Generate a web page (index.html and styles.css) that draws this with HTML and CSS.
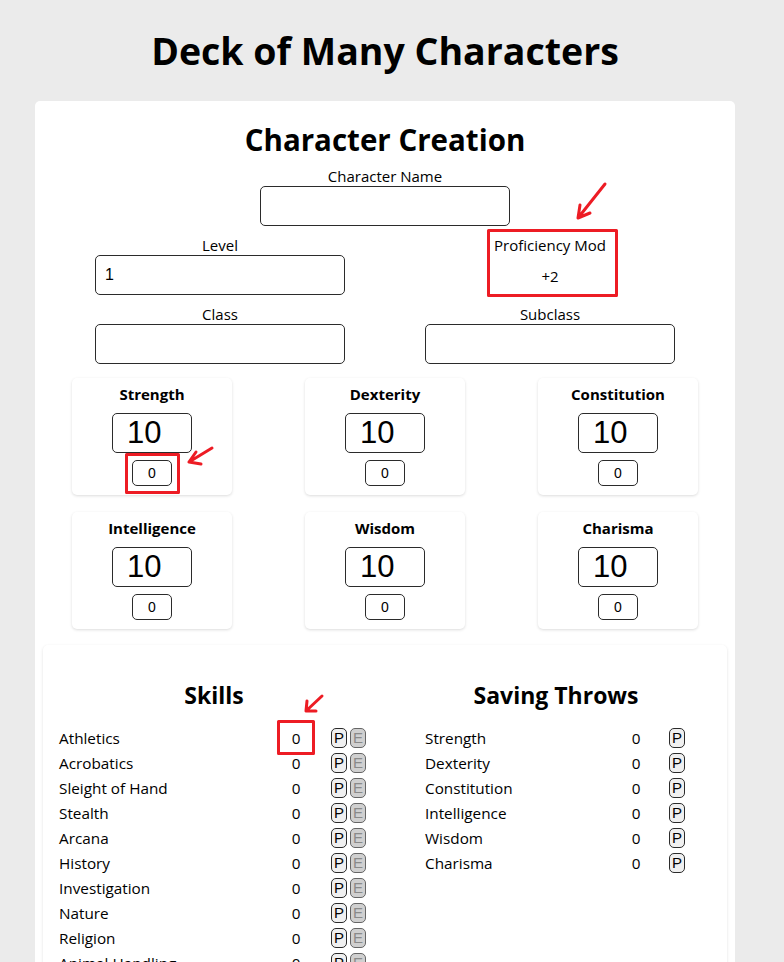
FILE: index.html
```html
<!DOCTYPE html>
<html lang="en">
<head>
<meta charset="utf-8">
<title>Deck of Many Characters</title>
<link rel="stylesheet" href="styles.css">
</head>
<body>
<div class="page">
  <h1 class="title">Deck of Many Characters</h1>
  <main class="card">
    <h2 class="card-title">Character Creation</h2>
    <div class="field field-name">
      <label class="field-label" for="cname">Character Name</label>
      <input class="text-input" id="cname" type="text">
    </div>
    <div class="field-grid">
      <div class="field">
        <label class="field-label" for="level">Level</label>
        <input class="text-input" id="level" type="text" value="1">
      </div>
      <div class="field">
        <span class="field-label">Proficiency Mod</span>
        <span class="prof-value">+2</span>
      </div>
      <div class="field">
        <label class="field-label" for="class">Class</label>
        <input class="text-input" id="class" type="text">
      </div>
      <div class="field">
        <label class="field-label" for="subclass">Subclass</label>
        <input class="text-input" id="subclass" type="text">
      </div>
    </div>

    <div class="ability-grid">
      <div class="ability"><div class="ability-name">Strength</div><input class="ability-score" type="text" value="10"><input class="ability-mod" type="text" value="0"></div>
      <div class="ability"><div class="ability-name">Dexterity</div><input class="ability-score" type="text" value="10"><input class="ability-mod" type="text" value="0"></div>
      <div class="ability"><div class="ability-name">Constitution</div><input class="ability-score" type="text" value="10"><input class="ability-mod" type="text" value="0"></div>
      <div class="ability"><div class="ability-name">Intelligence</div><input class="ability-score" type="text" value="10"><input class="ability-mod" type="text" value="0"></div>
      <div class="ability"><div class="ability-name">Wisdom</div><input class="ability-score" type="text" value="10"><input class="ability-mod" type="text" value="0"></div>
      <div class="ability"><div class="ability-name">Charisma</div><input class="ability-score" type="text" value="10"><input class="ability-mod" type="text" value="0"></div>
    </div>

    <section class="panel">
      <div class="panel-col col-skills">
        <h3 class="panel-title">Skills</h3>
        <ul class="stat-list">
          <li class="stat-row"><span class="stat-name">Athletics</span><span class="stat-val">0</span><span class="badges"><button class="badge">P</button><button class="badge badge-off">E</button></span></li>
          <li class="stat-row"><span class="stat-name">Acrobatics</span><span class="stat-val">0</span><span class="badges"><button class="badge">P</button><button class="badge badge-off">E</button></span></li>
          <li class="stat-row"><span class="stat-name">Sleight of Hand</span><span class="stat-val">0</span><span class="badges"><button class="badge">P</button><button class="badge badge-off">E</button></span></li>
          <li class="stat-row"><span class="stat-name">Stealth</span><span class="stat-val">0</span><span class="badges"><button class="badge">P</button><button class="badge badge-off">E</button></span></li>
          <li class="stat-row"><span class="stat-name">Arcana</span><span class="stat-val">0</span><span class="badges"><button class="badge">P</button><button class="badge badge-off">E</button></span></li>
          <li class="stat-row"><span class="stat-name">History</span><span class="stat-val">0</span><span class="badges"><button class="badge">P</button><button class="badge badge-off">E</button></span></li>
          <li class="stat-row"><span class="stat-name">Investigation</span><span class="stat-val">0</span><span class="badges"><button class="badge">P</button><button class="badge badge-off">E</button></span></li>
          <li class="stat-row"><span class="stat-name">Nature</span><span class="stat-val">0</span><span class="badges"><button class="badge">P</button><button class="badge badge-off">E</button></span></li>
          <li class="stat-row"><span class="stat-name">Religion</span><span class="stat-val">0</span><span class="badges"><button class="badge">P</button><button class="badge badge-off">E</button></span></li>
          <li class="stat-row"><span class="stat-name">Animal Handling</span><span class="stat-val">0</span><span class="badges"><button class="badge">P</button><button class="badge badge-off">E</button></span></li>
          <li class="stat-row"><span class="stat-name">Insight</span><span class="stat-val">0</span><span class="badges"><button class="badge">P</button><button class="badge badge-off">E</button></span></li>
          <li class="stat-row"><span class="stat-name">Medicine</span><span class="stat-val">0</span><span class="badges"><button class="badge">P</button><button class="badge badge-off">E</button></span></li>
          <li class="stat-row"><span class="stat-name">Perception</span><span class="stat-val">0</span><span class="badges"><button class="badge">P</button><button class="badge badge-off">E</button></span></li>
          <li class="stat-row"><span class="stat-name">Survival</span><span class="stat-val">0</span><span class="badges"><button class="badge">P</button><button class="badge badge-off">E</button></span></li>
        </ul>
      </div>
      <div class="panel-col col-saves">
        <h3 class="panel-title">Saving Throws</h3>
        <ul class="stat-list">
          <li class="stat-row"><span class="stat-name">Strength</span><span class="stat-val">0</span><span class="badges"><button class="badge">P</button></span></li>
          <li class="stat-row"><span class="stat-name">Dexterity</span><span class="stat-val">0</span><span class="badges"><button class="badge">P</button></span></li>
          <li class="stat-row"><span class="stat-name">Constitution</span><span class="stat-val">0</span><span class="badges"><button class="badge">P</button></span></li>
          <li class="stat-row"><span class="stat-name">Intelligence</span><span class="stat-val">0</span><span class="badges"><button class="badge">P</button></span></li>
          <li class="stat-row"><span class="stat-name">Wisdom</span><span class="stat-val">0</span><span class="badges"><button class="badge">P</button></span></li>
          <li class="stat-row"><span class="stat-name">Charisma</span><span class="stat-val">0</span><span class="badges"><button class="badge">P</button></span></li>
        </ul>
      </div>
    </section>
  </main>

  <svg class="annotations" width="784" height="962" viewBox="0 0 784 962" aria-hidden="true">
    <g fill="none" stroke="#ed1c24" stroke-width="3" stroke-linecap="round" stroke-linejoin="round">
      <rect x="488.5" y="230.5" width="128" height="65"/>
      <path d="M605 184 L578 218 M578 218 L580 205 M578 218 L590 213"/>
      <rect x="126.5" y="454.5" width="52" height="38"/>
      <path d="M212 448 L189 462 M189 462 L196 452 M189 462 L201 464"/>
      <rect x="278.5" y="721.5" width="35" height="32"/>
      <path d="M322 696 L306 711 M306 711 L307 701 M306 711 L316 711"/>
    </g>
  </svg>
</div>
</body>
</html>
```

FILE: styles.css
```css
* { box-sizing: border-box; }

html, body {
  margin: 0;
  padding: 0;
}

body {
  background: #ebebeb;
  font-family: "Open Sans", "Noto Sans", sans-serif;
  font-size: 16px;
  color: #000;
}

.page {
  position: relative;
  width: 770px;
  padding-top: 27px;
  min-height: 962px;
}

.title {
  margin: 0 0 26px;
  font-size: 37.5px;
  line-height: 48px;
  font-weight: 700;
  text-align: center;
}

.card {
  width: 700px;
  margin: 0 auto;
  background: #fff;
  border-radius: 5px;
  padding: 19px 0 20px;
}

.card-title {
  margin: 0 0 6px;
  font-size: 29.5px;
  line-height: 40px;
  font-weight: 700;
  text-align: center;
}

.field {
  display: flex;
  flex-direction: column;
  align-items: center;
  width: 250px;
}

.field-name {
  margin: 0 auto 9px;
}

.field-label {
  display: block;
  font-size: 15px;
  line-height: 20px;
  text-align: center;
}

.text-input {
  width: 250px;
  height: 40px;
  border: 1px solid #2b2b2b;
  border-radius: 5px;
  padding: 0 9px;
  font-family: "Liberation Sans", Arial, sans-serif;
  font-size: 16px;
  background: #fff;
  color: #000;
}

.prof-value {
  display: block;
  margin-top: 11px;
  font-size: 15px;
  line-height: 20px;
}

.field-grid {
  display: grid;
  grid-template-columns: 250px 250px;
  justify-content: center;
  column-gap: 80px;
  row-gap: 9px;
}

.ability-grid {
  display: grid;
  grid-template-columns: repeat(3, 160px);
  justify-content: center;
  column-gap: 73px;
  row-gap: 17px;
  margin-top: 14px;
}

.ability {
  display: flex;
  flex-direction: column;
  align-items: center;
  height: 117px;
  padding-top: 6px;
  background: #fff;
  border-radius: 5px;
  box-shadow: 0 1px 3px rgba(0, 0, 0, 0.14);
}

.ability-name {
  font-size: 15px;
  line-height: 20px;
  font-weight: 700;
}

.ability-score {
  margin-top: 9px;
  width: 80px;
  height: 40px;
  border: 1px solid #2b2b2b;
  border-radius: 5px;
  padding: 0 0 0 14px;
  font-family: "Liberation Sans", Arial, sans-serif;
  font-size: 31px;
  color: #000;
  background: #fff;
}

.ability-mod {
  margin-top: 7px;
  width: 40px;
  height: 26px;
  border: 1px solid #2b2b2b;
  border-radius: 5px;
  padding: 0;
  text-align: center;
  font-family: "Liberation Sans", Arial, sans-serif;
  font-size: 14px;
  color: #000;
  background: #fff;
}

.panel {
  display: flex;
  gap: 56px;
  margin: 16px 8px 0;
  padding: 34px 16px 20px;
  background: #fff;
  border-radius: 5px;
  box-shadow: 0 1px 3px rgba(0, 0, 0, 0.12);
}

.col-skills { width: 310px; }
.col-saves { width: 262px; }

.panel-title {
  margin: 0 0 14px;
  font-size: 23px;
  line-height: 32px;
  font-weight: 700;
  text-align: center;
}

.stat-list {
  list-style: none;
  margin: 0;
  padding: 0;
}

.stat-row {
  display: flex;
  align-items: center;
  height: 25px;
  font-size: 15.3px;
}

.stat-name {
  flex: none;
}

.col-skills .stat-name { width: 222px; }
.col-saves .stat-name { width: 196px; }

.stat-val {
  width: 30px;
  text-align: center;
}

.badges {
  display: flex;
  gap: 3px;
}

.col-skills .badges { margin-left: 20px; }
.col-saves .badges { margin-left: 18px; }

.badge {
  width: 16px;
  height: 20px;
  padding: 0;
  border: 1px solid #2b2b2b;
  border-radius: 5px;
  background: #f0f0f0;
  color: #000;
  font-family: "Liberation Sans", Arial, sans-serif;
  font-size: 15px;
  line-height: 18px;
  text-align: center;
}

.badge-off {
  background: #d0d0d0;
  color: #8a8a8a;
  border-color: #666;
}

.annotations {
  position: absolute;
  top: 0;
  left: 0;
  pointer-events: none;
}
```
